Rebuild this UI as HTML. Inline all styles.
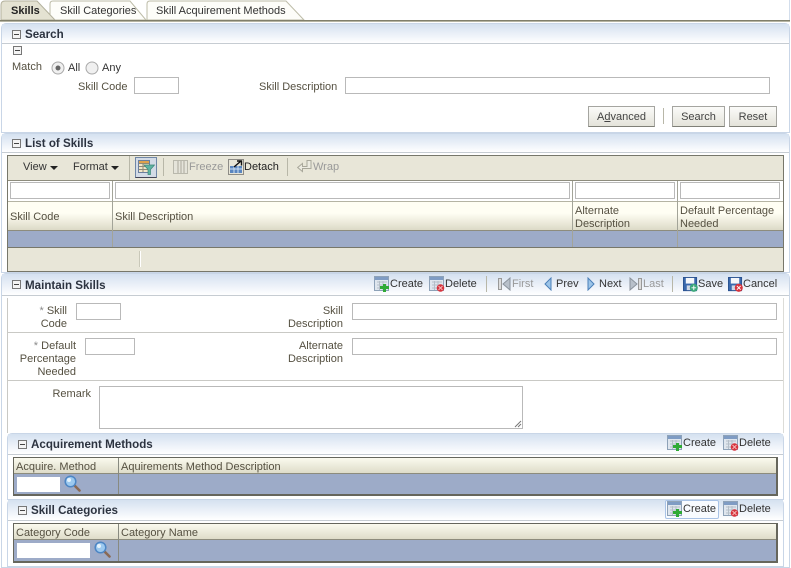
<!DOCTYPE html>
<html><head><meta charset="utf-8">
<style>
html,body{margin:0;padding:0;background:#fff}
#p{position:relative;width:791px;height:568px;overflow:hidden;background:#fff;font:11px "Liberation Sans",sans-serif;color:#333}
#p div,#p svg,#p span.t{position:absolute}
.t{white-space:nowrap;line-height:14px;margin-top:1px}
.l{color:#555041}
.d{color:#999}
.b{font-weight:bold;font-size:11.6px;color:#2c3340}
.i{background:#fff;border:1px solid #b9b9b9;box-sizing:border-box}
.h{background:linear-gradient(#d5e1f0,#f0f4fa 65%,#fff);border-bottom:1px solid #c6ccd2;box-sizing:border-box}
.pb{border:1px solid #c9d6e7;box-sizing:border-box;border-radius:5px 5px 0 0;background:#fff}
.btn{box-sizing:border-box;border:1px solid #a5a5a0;border-bottom-color:#808078;background:linear-gradient(#fbfbf9,#e4e3da);text-align:center;line-height:21px;color:#444}
.sq{width:9px;height:9px;box-sizing:border-box;border:1px solid #777;background:#f4f4f4}
.sq:after{content:"";position:absolute;left:1px;top:3px;width:5px;height:1px;background:#444}
.sep{width:1px;background:#b8b7a8}
</style></head><body>
<svg width="0" height="0" style="position:absolute">
<defs>
<symbol id="tb" viewBox="0 0 16 16"><rect x=".5" y=".5" width="14" height="14" fill="#dfe6ee" stroke="#8ea2b8"/><rect x="1" y="1" width="13" height="3" fill="#7f9cc4"/><path d="M3 6h10M3 9h10M3 12h10M5.500 5v9M9 5v9" stroke="#b4bec8" fill="none"/></symbol>
<symbol id="create" viewBox="0 0 16 16"><use href="#tb"/><path d="M9 8h3v2h3v3h-3v3H9v-3H6v-3h3z" fill="#2faa35"/></symbol>
<symbol id="del" viewBox="0 0 16 16"><use href="#tb"/><circle cx="11.500" cy="12" r="3.800" fill="#d6333d"/><path d="M9.500 10l4 4M13.500 10l-4 4" stroke="#f5b5b5"/></symbol>
<symbol id="mag" viewBox="0 0 17 17"><path d="M10 10l5.500 5.500" stroke="#8a6a55" stroke-width="2.600" stroke-linecap="round"/><circle cx="6.500" cy="6.500" r="5.300" fill="#9cc9ef" stroke="#4d86c4" stroke-width="1.500"/><circle cx="5" cy="5" r="2" fill="#e6f3fc"/></symbol>
<symbol id="save" viewBox="0 0 16 16"><path d="M.5.500h14v14H.5z" fill="#3a69ad" stroke="#2a5291"/><rect x="3" y="1" width="9" height="6" fill="#f5f7fa"/><rect x="4" y="9" width="7" height="5" fill="#cfd8e6"/></symbol>
</defs></svg>
<div id="p">
<!-- tabs -->
<svg style="left:0;top:0" width="791" height="24">
<path d="M147 20V4q0-3 3-3h136l18 19z" fill="#fdfdf9" stroke="#bdbca8"/>
<path d="M50 20V4q0-3 3-3h77l16 19z" fill="#fdfdf9" stroke="#bdbca8"/>
<path d="M1 20V5q0-4 4-4h32l18 19z" fill="#e4e2d2" stroke="#b3b19d"/>
<rect x="0" y="20" width="790" height="1" fill="#807f6b"/><rect x="0" y="21" width="790" height="1" fill="#b5b4a3"/>
<rect x="789" y="0" width="1" height="20" fill="#d3deec"/>
</svg>
<span class="t b" style="left:11px;top:3px;color:#222;font-size:11px">Skills</span>
<span class="t" style="left:60px;top:3px">Skill Categories</span>
<span class="t" style="left:156px;top:3px">Skill Acquirement Methods</span>

<!-- search -->
<div class="pb" style="left:1px;top:23px;width:789px;height:110px"></div>
<div class="h" style="left:2px;top:24px;width:787px;height:20px"></div>
<div class="sq" style="left:12px;top:30px"></div>
<span class="t b" style="left:25px;top:27px">Search</span>
<div class="sq" style="left:13px;top:46px"></div>
<span class="t l" style="left:12px;top:59px">Match</span>
<svg style="left:51px;top:61px" width="14" height="14"><circle cx="7" cy="7" r="6" fill="#f0f0f0" stroke="#a9a9a9"/><circle cx="7" cy="7" r="2.500" fill="#666"/></svg>
<span class="t" style="left:68px;top:60px">All</span>
<svg style="left:85px;top:61px" width="14" height="14"><circle cx="7" cy="7" r="6" fill="#f0f0f0" stroke="#a9a9a9"/></svg>
<span class="t" style="left:102px;top:60px">Any</span>
<span class="t l" style="left:78px;top:79px">Skill Code</span>
<div class="i" style="left:134px;top:77px;width:45px;height:17px"></div>
<span class="t l" style="left:259px;top:79px">Skill Description</span>
<div class="i" style="left:345px;top:77px;width:425px;height:17px"></div>
<div class="btn" style="left:588px;top:106px;width:67px;height:21px">A<u>d</u>vanced</div>
<div class="sep" style="left:663px;top:108px;height:16px"></div>
<div class="btn" style="left:672px;top:106px;width:53px;height:21px">Search</div>
<div class="btn" style="left:729px;top:106px;width:48px;height:21px">Reset</div>

<!-- list -->
<div class="pb" style="left:1px;top:133px;width:789px;height:140px"></div>
<div class="h" style="left:2px;top:134px;width:787px;height:19px"></div>
<div class="sq" style="left:12px;top:139px"></div>
<span class="t b" style="left:25px;top:136px">List of Skills</span>
<div style="left:7px;top:155px;width:777px;height:117px;background:#e8e6d8;border:1px solid #77776a;box-sizing:border-box"></div>
<span class="t" style="left:23px;top:159px">View</span>
<svg style="left:50px;top:166px" width="8" height="4"><path d="M0 0h8L4 4z" fill="#222"/></svg>
<span class="t" style="left:73px;top:159px">Format</span>
<svg style="left:111px;top:166px" width="8" height="4"><path d="M0 0h8L4 4z" fill="#222"/></svg>
<div class="sep" style="left:129px;top:156px;height:24px"></div>
<div style="left:135px;top:157px;width:22px;height:21px;box-sizing:border-box;border:1px solid #6f86a6;border-bottom-color:#445;background:#d3dbe6"></div>
<svg style="left:138px;top:159px" width="17" height="16" viewBox="0 0 17 16"><rect x=".5" y="1.500" width="11" height="12" fill="#f2e6c9" stroke="#6b7f9e"/><path d="M1 4.500h10M1 7.500h10M1 10.500h10M5 4v9" stroke="#8f8a78" fill="none"/><rect x="1" y="2" width="10" height="2" fill="#e0a24c"/><path d="M6 6h10.500l-4 4.500V15.500h-2.500v-5z" fill="#5fb3a2" stroke="#3c8878" stroke-width=".7"/></svg>
<div class="sep" style="left:163px;top:158px;height:18px"></div>
<svg style="left:173px;top:160px" width="16" height="15"><rect x=".5" y=".5" width="14" height="13" fill="#e5e4da" stroke="#b9b8ac"/><path d="M5 1v12M8 1v12M11 1v12" stroke="#aaa99c" fill="none"/></svg>
<span class="t d" style="left:189px;top:159px">Freeze</span>
<svg style="left:228px;top:159px" width="16" height="16"><rect x=".5" y=".5" width="15" height="15" fill="none" stroke="#333" stroke-dasharray="1 1"/><rect x="2" y="7" width="12" height="7" fill="#5a86c0"/><path d="M2 10h12M6 7v7M10 7v7" stroke="#cfe0f2"/><path d="M6 8l7-6M9 2h4.500v4.500" stroke="#111" stroke-width="1.400" fill="none"/></svg>
<span class="t" style="left:244px;top:159px;color:#222">Detach</span>
<div class="sep" style="left:287px;top:158px;height:18px"></div>
<svg style="left:297px;top:160px" width="15" height="14"><path d="M10 .5h4v8H5.500v3L.7 7.500l4.800-4v3H10z" fill="#ecebe1" stroke="#a9a89b"/></svg>
<span class="t d" style="left:313px;top:159px">Wrap</span>
<div style="left:8px;top:180px;width:775px;height:1px;background:#8d8c7d"></div>
<div style="left:8px;top:181px;width:775px;height:20px;background:#fff"></div>
<div class="i" style="left:10px;top:182px;width:100px;height:17px"></div>
<div class="i" style="left:115px;top:182px;width:455px;height:17px"></div>
<div class="i" style="left:575px;top:182px;width:100px;height:17px"></div>
<div class="i" style="left:680px;top:182px;width:100px;height:17px"></div>
<div style="left:8px;top:201px;width:775px;height:29px;background:linear-gradient(#fffef3,#fffef3 40%,#dcdac7);border-top:1px solid #b5b4a3;box-sizing:border-box"></div>
<span class="t l" style="left:10px;top:209px">Skill Code</span>
<span class="t l" style="left:115px;top:209px">Skill Description</span>
<span class="t l" style="left:575px;top:203px">Alternate</span>
<span class="t l" style="left:575px;top:216px">Description</span>
<span class="t l" style="left:680px;top:203px">Default Percentage</span>
<span class="t l" style="left:680px;top:216px">Needed</span>
<div style="left:8px;top:230px;width:775px;height:1px;background:#8d8c7d"></div>
<div style="left:8px;top:231px;width:775px;height:16px;background:#9dabc8"></div>
<div style="left:8px;top:247px;width:775px;height:1px;background:#77776a"></div>
<div style="left:112px;top:181px;width:1px;height:66px;background:#a3a498"></div>
<div style="left:572px;top:181px;width:1px;height:66px;background:#a3a498"></div>
<div style="left:677px;top:181px;width:1px;height:66px;background:#a3a498"></div>
<div style="left:139px;top:251px;width:1px;height:16px;background:#c9c8b9"></div>
<div style="left:140px;top:251px;width:1px;height:16px;background:#fff"></div>

<!-- maintain -->
<div class="pb" style="left:1px;top:273px;width:789px;height:295px"></div>
<div class="h" style="left:2px;top:274px;width:787px;height:22px"></div>
<div class="sq" style="left:12px;top:280px"></div>
<span class="t b" style="left:25px;top:278px">Maintain Skills</span>
<svg style="left:374px;top:276px" width="16" height="16"><use href="#create"/></svg>
<span class="t" style="left:390px;top:276px">Create</span>
<svg style="left:429px;top:276px" width="16" height="16"><use href="#del"/></svg>
<span class="t" style="left:445px;top:276px">Delete</span>
<div class="sep" style="left:486px;top:276px;height:16px"></div>
<svg style="left:498px;top:277px" width="13" height="14"><rect x=".5" y="1.500" width="3" height="11" fill="#ddd" stroke="#999"/><path d="M12 1v12L5 7z" fill="#b8c0ca" stroke="#8a929c"/></svg>
<span class="t d" style="left:512px;top:276px">First</span>
<svg style="left:544px;top:277px" width="8" height="14"><path d="M7 1v12L1 7z" fill="#9cc4e8" stroke="#4a7fb8"/></svg>
<span class="t" style="left:556px;top:276px">Prev</span>
<svg style="left:587px;top:277px" width="8" height="14"><path d="M1 1v12l6-6z" fill="#9cc4e8" stroke="#4a7fb8"/></svg>
<span class="t" style="left:599px;top:276px">Next</span>
<svg style="left:629px;top:277px" width="13" height="14"><path d="M1 1v12l7-6z" fill="#b8c0ca" stroke="#8a929c"/><rect x="9.500" y="1.500" width="3" height="11" fill="#ddd" stroke="#999"/></svg>
<span class="t d" style="left:643px;top:276px">Last</span>
<div class="sep" style="left:672px;top:276px;height:16px"></div>
<svg style="left:683px;top:277px" width="15" height="15" viewBox="0 0 16 16"><use href="#save"/><circle cx="11.500" cy="11.500" r="4.300" fill="#3aa67a"/><path d="M11.500 9v5M9 11.500h5" stroke="#fff"/></svg>
<span class="t" style="left:698px;top:276px">Save</span>
<svg style="left:728px;top:277px" width="15" height="15" viewBox="0 0 16 16"><use href="#save"/><circle cx="11.500" cy="11.500" r="4.300" fill="#d6333d"/><path d="M9.500 9.500l4 4M13.500 9.500l-4 4" stroke="#fff"/></svg>
<span class="t" style="left:743px;top:276px">Cancel</span>
<div style="left:7px;top:298px;width:1px;height:135px;background:#c9c9c5"></div>
<div style="left:783px;top:298px;width:1px;height:135px;background:#dcdcd8"></div>
<div style="left:8px;top:332px;width:775px;height:1px;background:#c9c9c5"></div>
<div style="left:8px;top:380px;width:775px;height:1px;background:#c9c9c5"></div>
<span class="t l" style="right:724px;top:303px"><span style="color:#8a8a8a">* </span>Skill</span>
<span class="t l" style="right:724px;top:316px">Code</span>
<div class="i" style="left:76px;top:303px;width:45px;height:17px"></div>
<span class="t l" style="right:448px;top:303px">Skill</span>
<span class="t l" style="right:448px;top:316px">Description</span>
<div class="i" style="left:352px;top:303px;width:425px;height:17px"></div>
<span class="t l" style="right:715px;top:338px"><span style="color:#8a8a8a">* </span>Default</span>
<span class="t l" style="right:715px;top:351px">Percentage</span>
<span class="t l" style="right:715px;top:364px">Needed</span>
<div class="i" style="left:85px;top:338px;width:50px;height:17px"></div>
<span class="t l" style="right:448px;top:338px">Alternate</span>
<span class="t l" style="right:448px;top:351px">Description</span>
<div class="i" style="left:352px;top:338px;width:425px;height:17px"></div>
<span class="t l" style="right:700px;top:386px">Remark</span>
<div class="i" style="left:99px;top:386px;width:424px;height:43px"></div>
<svg style="left:514px;top:420px" width="8" height="8"><path d="M1 7l6-6M4 7l3-3" stroke="#777" fill="none"/></svg>

<!-- acquirement -->
<div class="pb" style="left:7px;top:433px;width:777px;height:67px"></div>
<div class="h" style="left:8px;top:434px;width:775px;height:21px"></div>
<div class="sq" style="left:18px;top:440px"></div>
<span class="t b" style="left:31px;top:437px">Acquirement Methods</span>
<svg style="left:667px;top:435px" width="16" height="16"><use href="#create"/></svg>
<span class="t" style="left:683px;top:435px">Create</span>
<svg style="left:723px;top:435px" width="16" height="16"><use href="#del"/></svg>
<span class="t" style="left:739px;top:435px">Delete</span>
<div style="left:13px;top:457px;width:765px;height:39px;border:1px solid #66665c;border-bottom-width:2px;border-right-width:2px;box-sizing:border-box;background:#9dabc8"></div>
<div style="left:14px;top:458px;width:762px;height:16px;background:linear-gradient(#fbfaee,#dedcc9);border-bottom:1px solid #8d8c7d;box-sizing:border-box"></div>
<div style="left:118px;top:458px;width:1px;height:36px;background:#888a80"></div>
<span class="t l" style="left:16px;top:459px">Acquire. Method</span>
<span class="t l" style="left:121px;top:459px">Aquirements Method Description</span>
<div style="left:17px;top:477px;width:43px;height:15px;background:#fff"></div>
<svg style="left:64px;top:475px" width="17" height="17"><use href="#mag"/></svg>

<!-- categories -->
<div class="pb" style="left:7px;top:499px;width:777px;height:68px"></div>
<div class="h" style="left:8px;top:500px;width:775px;height:21px"></div>
<div class="sq" style="left:18px;top:506px"></div>
<span class="t b" style="left:31px;top:503px">Skill Categories</span>
<div style="left:665px;top:500px;width:54px;height:19px;box-sizing:border-box;border:1px solid #a9c3e6;border-radius:2px;background:#f8fbff"></div>
<svg style="left:667px;top:501px" width="16" height="16"><use href="#create"/></svg>
<span class="t" style="left:683px;top:501px">Create</span>
<svg style="left:723px;top:501px" width="16" height="16"><use href="#del"/></svg>
<span class="t" style="left:739px;top:501px">Delete</span>
<div style="left:13px;top:523px;width:765px;height:40px;border:1px solid #66665c;border-bottom-width:2px;border-right-width:2px;box-sizing:border-box;background:#9dabc8"></div>
<div style="left:14px;top:524px;width:762px;height:16px;background:linear-gradient(#fbfaee,#dedcc9);border-bottom:1px solid #8d8c7d;box-sizing:border-box"></div>
<div style="left:118px;top:524px;width:1px;height:37px;background:#888a80"></div>
<span class="t l" style="left:16px;top:525px">Category Code</span>
<span class="t l" style="left:121px;top:525px">Category Name</span>
<div style="left:17px;top:543px;width:73px;height:15px;background:#fff"></div>
<svg style="left:94px;top:541px" width="17" height="17"><use href="#mag"/></svg>
</div>
</body></html>
